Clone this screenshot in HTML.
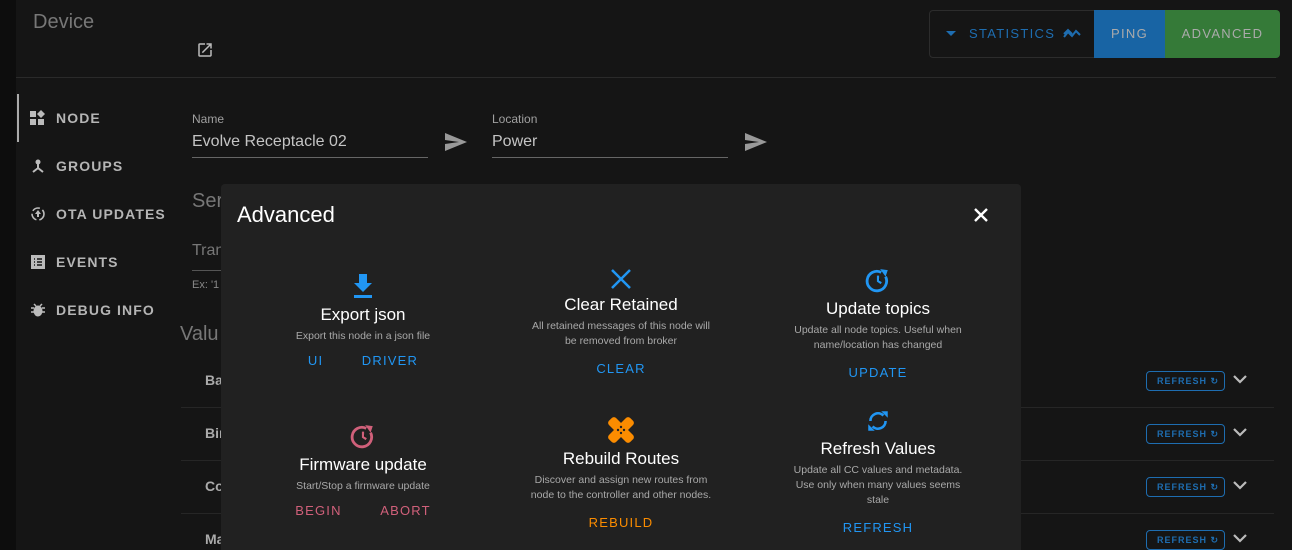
<!DOCTYPE html>
<html><head><meta charset="utf-8"><style>
*{box-sizing:border-box;margin:0;padding:0}
html,body{width:1292px;height:550px;overflow:hidden}
body{background:#0d0d0d;font-family:"Liberation Sans",sans-serif;position:relative;color:#bbb}
.main{position:absolute;left:16px;top:0;width:1276px;height:550px;background:#151515}
.abs{position:absolute}
.nav{position:absolute;left:56px;font-size:14px;font-weight:bold;letter-spacing:1.1px;color:#b5b5b5}
.nicon{position:absolute;left:30px;width:16px;height:16px}
.lbl{font-size:12px;color:#a0a0a0}
.inp{font-size:16px;color:#c4c4c4}
.row{position:absolute;left:181px;width:1093px;border-bottom:1px solid #262626;height:53px}
.rbtn{position:absolute;left:1146px;width:79px;height:20px;border:1px solid #1e6db0;border-radius:4px;color:#1e6db0;font-size:9px;letter-spacing:1px;font-weight:bold;line-height:18px;padding-left:10px}
.chev{position:absolute;left:1233px}
.modal{position:absolute;left:221px;top:184px;width:800px;height:380px;background:#212121;border-radius:4px}
.c{position:absolute;text-align:center;width:260px}
.t{font-size:17px;color:#fff}
.d{font-size:10.5px;color:#a9a9a9;line-height:15px;margin-top:4px}
.a{font-size:13px;letter-spacing:1.2px;margin-top:12px}
</style></head><body>
<div class="main">
 <div class="abs" style="left:17px;top:11px;font-size:20px;color:#777">Device</div>
 <svg class="abs" style="left:180px;top:41px" width="18" height="18" viewBox="0 0 24 24"><path fill="#bbb" d="M19 19H5V5h7V3H5a2 2 0 0 0-2 2v14a2 2 0 0 0 2 2h14c1.1 0 2-.9 2-2v-7h-2v7zM14 3v2h3.59l-9.83 9.83 1.41 1.41L19 6.41V10h2V3h-7z"/></svg>
 <div class="abs" style="left:913px;top:10px;width:166px;height:48px;border:1px solid #2c2c2c;border-radius:4px 0 0 4px"></div>
 <svg class="abs" style="left:930px;top:31px" width="10" height="6"><path d="M0 0h10L5 5z" fill="#1e6db0"/></svg>
 <div class="abs" style="left:953px;top:26px;color:#1e6db0;font-size:13px;letter-spacing:1.3px">STATISTICS</div>
 <svg class="abs" style="left:1047px;top:28px" width="18" height="12" viewBox="0 0 18 12"><path fill="none" stroke="#1e6db0" stroke-width="2" d="M1 9l4-5 4 4 4-5 4 4M1 6l4-4 4 4"/></svg>
 <div class="abs" style="left:1078px;top:10px;width:71px;height:48px;background:#1864a4;color:#aaa;font-size:13px;letter-spacing:1.3px;text-align:center;line-height:48px">PING</div>
 <div class="abs" style="left:1149px;top:10px;width:115px;height:48px;background:#357a38;color:#aaa;font-size:13px;letter-spacing:1.3px;text-align:center;line-height:48px;border-radius:0 4px 4px 0">ADVANCED</div>
 <div class="abs" style="left:0;top:77px;width:1260px;height:1px;background:#2a2a2a"></div>
 <div class="abs" style="left:1px;top:94px;width:2px;height:48px;background:#aaa"></div>
</div>
<svg class="nicon" style="top:110px" viewBox="0 0 16 16"><path fill="#bbb" d="M0 1h6v6H0zM0 9h6v6H0zM8 9h6v6H8zM11 0l4 4-4 4-4-4z"/></svg>
<div class="nav" style="top:110px">NODE</div>
<svg class="nicon" style="top:158px" viewBox="0 0 16 16"><circle cx="8" cy="4" r="2.5" fill="#bbb"/><path stroke="#bbb" stroke-width="2" d="M8 6v4L3 14M8 10l5 4"/></svg>
<div class="nav" style="top:158px">GROUPS</div>
<svg class="nicon" style="top:206px" viewBox="0 0 16 16"><circle cx="8" cy="8" r="6" fill="none" stroke="#bbb" stroke-width="1.6" stroke-dasharray="8 3"/><path fill="#bbb" d="M8 4l3 4H9v3H7V8H5z"/></svg>
<div class="nav" style="top:206px">OTA UPDATES</div>
<svg class="nicon" style="top:254px" viewBox="0 0 16 16"><rect x="1" y="1" width="14" height="14" fill="#bbb"/><path stroke="#151515" stroke-width="1.4" d="M4 5h1M7 5h5M4 8h1M7 8h5M4 11h1M7 11h5"/></svg>
<div class="nav" style="top:254px">EVENTS</div>
<svg class="nicon" style="top:302px" viewBox="0 0 16 16"><ellipse cx="8" cy="9" rx="4.5" ry="5.5" fill="#bbb"/><path stroke="#bbb" stroke-width="1.5" d="M1 6h3M12 6h3M1 10h3M12 10h3M4 2l2 2M12 2l-2 2"/></svg>
<div class="nav" style="top:302px">DEBUG INFO</div>

<div class="abs lbl" style="left:192px;top:112px">Name</div>
<div class="abs inp" style="left:192px;top:133px">Evolve Receptacle 02</div>
<div class="abs" style="left:192px;top:157px;width:236px;height:1px;background:#666"></div>
<svg class="abs" style="left:445px;top:133px" width="22" height="18" viewBox="0 0 22 18"><path fill="#999" d="M0 0l22 9L0 18l0-7 14-2L0 7z"/></svg>
<div class="abs lbl" style="left:492px;top:112px">Location</div>
<div class="abs inp" style="left:492px;top:133px">Power</div>
<div class="abs" style="left:492px;top:157px;width:236px;height:1px;background:#666"></div>
<svg class="abs" style="left:745px;top:133px" width="22" height="18" viewBox="0 0 22 18"><path fill="#999" d="M0 0l22 9L0 18l0-7 14-2L0 7z"/></svg>
<div class="abs" style="left:192px;top:190px;font-size:20px;color:#777">Ser</div>
<div class="abs" style="left:192px;top:242px;font-size:16px;color:#777">Tran</div>
<div class="abs" style="left:192px;top:270px;width:40px;height:1px;background:#555"></div>
<div class="abs" style="left:192px;top:279px;font-size:11px;color:#888">Ex: '1</div>
<div class="abs" style="left:180px;top:323px;font-size:20px;color:#777">Valu</div>
<div class="row" style="top:355px"></div><div class="abs" style="left:205px;top:372px;color:#aaa;font-size:14px;font-weight:bold">Ba</div>
<div class="row" style="top:408px"></div><div class="abs" style="left:205px;top:425px;color:#aaa;font-size:14px;font-weight:bold">Bir</div>
<div class="row" style="top:461px"></div><div class="abs" style="left:205px;top:478px;color:#aaa;font-size:14px;font-weight:bold">Co</div>
<div class="abs" style="left:205px;top:531px;color:#aaa;font-size:14px;font-weight:bold">Ma</div>
<div class="rbtn" style="top:371px">REFRESH ↻</div><svg class="chev" style="top:375px" width="14" height="9"><path d="M1 1l6 6 6-6" fill="none" stroke="#bbb" stroke-width="2.2"/></svg>
<div class="rbtn" style="top:424px">REFRESH ↻</div><svg class="chev" style="top:428px" width="14" height="9"><path d="M1 1l6 6 6-6" fill="none" stroke="#bbb" stroke-width="2.2"/></svg>
<div class="rbtn" style="top:477px">REFRESH ↻</div><svg class="chev" style="top:481px" width="14" height="9"><path d="M1 1l6 6 6-6" fill="none" stroke="#bbb" stroke-width="2.2"/></svg>
<div class="rbtn" style="top:530px">REFRESH ↻</div><svg class="chev" style="top:534px" width="14" height="9"><path d="M1 1l6 6 6-6" fill="none" stroke="#bbb" stroke-width="2.2"/></svg>

<div class="modal">
 <div class="abs" style="left:16px;top:18px;font-size:22px;color:#fff">Advanced</div>
 <svg class="abs" style="left:753px;top:24px" width="14" height="14"><path d="M1 1l12 12M13 1L1 13" stroke="#fff" stroke-width="2.4"/></svg>
 <div class="c" style="left:12px;top:90px">
  <svg width="22" height="24" viewBox="0 0 22 24"><path fill="#2196f3" d="M7 0h8v9h5l-9 9-9-9h5zM2 21h18v3H2z"/></svg>
  <div class="t" style="margin-top:2px">Export json</div>
  <div class="d">Export this node in a json file</div>
  <div class="a" style="color:#2196f3;margin-top:9px">UI&nbsp;&nbsp;&nbsp;&nbsp;&nbsp;&nbsp;&nbsp;&nbsp;DRIVER</div>
 </div>
 <div class="c" style="left:270px;top:84px">
  <svg width="22" height="22" viewBox="0 0 22 22"><path stroke="#2196f3" stroke-width="2.5" d="M2 2l18 18M20 2L2 20"/></svg>
  <div class="t">Clear Retained</div>
  <div class="d">All retained messages of this node will<br>be removed from broker</div>
  <div class="a" style="color:#2196f3">CLEAR</div>
 </div>
 <div class="c" style="left:527px;top:84px">
  <svg width="26" height="26" viewBox="0 0 24 24"><path fill="none" stroke="#2196f3" stroke-width="2.6" d="M19 8a9 9 0 1 1-4-4"/><path fill="#2196f3" d="M14 1l7 1-2 6z"/><path stroke="#2196f3" stroke-width="2" d="M12 7v5l3 2"/></svg>
  <div class="t">Update topics</div>
  <div class="d">Update all node topics. Useful when<br>name/location has changed</div>
  <div class="a" style="color:#2196f3">UPDATE</div>
 </div>
 <div class="c" style="left:12px;top:240px">
  <svg width="26" height="26" viewBox="0 0 24 24"><path fill="none" stroke="#d0607a" stroke-width="2.6" d="M19 8a9 9 0 1 1-4-4"/><path fill="#d0607a" d="M14 1l7 1-2 6z"/><path stroke="#d0607a" stroke-width="2" d="M12 7v5l3 2"/></svg>
  <div class="t">Firmware update</div>
  <div class="d">Start/Stop a firmware update</div>
  <div class="a" style="color:#d0607a;margin-top:9px">BEGIN&nbsp;&nbsp;&nbsp;&nbsp;&nbsp;&nbsp;&nbsp;&nbsp;ABORT</div>
 </div>
 <div class="c" style="left:270px;top:232px">
  <svg width="28" height="28" viewBox="0 0 28 28"><g fill="#fb8c00"><rect x="9" y="-1" width="10" height="30" rx="3" transform="rotate(45 14 14)"/><rect x="9" y="-1" width="10" height="30" rx="3" transform="rotate(-45 14 14)"/></g><g fill="#212121"><circle cx="14" cy="11" r="1.2"/><circle cx="11" cy="14" r="1.2"/><circle cx="17" cy="14" r="1.2"/><circle cx="14" cy="17" r="1.2"/></g></svg>
  <div class="t">Rebuild Routes</div>
  <div class="d">Discover and assign new routes from<br>node to the controller and other nodes.</div>
  <div class="a" style="color:#fb8c00">REBUILD</div>
 </div>
 <div class="c" style="left:527px;top:224px">
  <svg width="28" height="26" viewBox="0 0 24 24"><path fill="none" stroke="#2196f3" stroke-width="2.4" d="M5 12a7 7 0 0 1 12-5M19 12a7 7 0 0 1-12 5"/><path fill="#2196f3" d="M15 3h6v6zM9 21H3v-6z"/></svg>
  <div class="t">Refresh Values</div>
  <div class="d">Update all CC values and metadata.<br>Use only when many values seems<br>stale</div>
  <div class="a" style="color:#2196f3">REFRESH</div>
 </div>
</div>
</body></html>
